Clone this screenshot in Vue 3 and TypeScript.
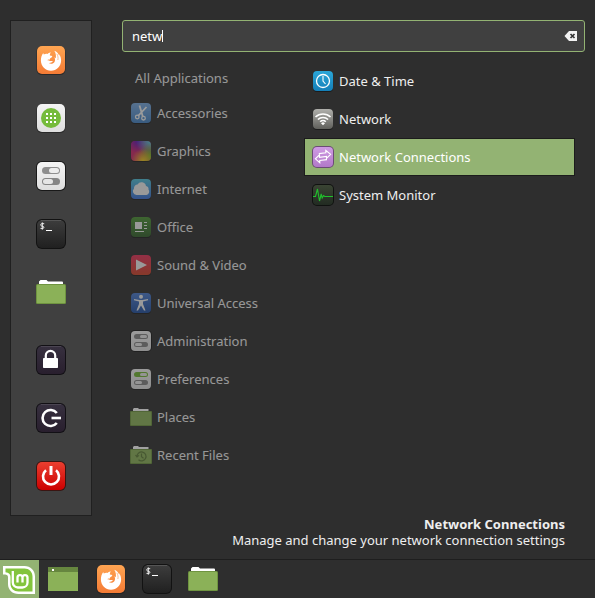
<script setup lang="ts">
import { nextTick, onMounted, ref, watch } from 'vue'

interface Entry {
  label: string
  icon: string
}

const favorites: Entry[] = [
  { label: 'Firefox', icon: 'firefox' },
  { label: 'Software Manager', icon: 'software' },
  { label: 'System Settings', icon: 'settings' },
  { label: 'Terminal', icon: 'terminal' },
  { label: 'Files', icon: 'files' },
]

const session: Entry[] = [
  { label: 'Lock screen', icon: 'lock' },
  { label: 'Log out', icon: 'logout' },
  { label: 'Shut down', icon: 'power' },
]

const categories: Entry[] = [
  { label: 'Accessories', icon: 'accessories' },
  { label: 'Graphics', icon: 'graphics' },
  { label: 'Internet', icon: 'internet' },
  { label: 'Office', icon: 'office' },
  { label: 'Sound & Video', icon: 'media' },
  { label: 'Universal Access', icon: 'access' },
  { label: 'Administration', icon: 'admin' },
  { label: 'Preferences', icon: 'prefs' },
  { label: 'Places', icon: 'places' },
  { label: 'Recent Files', icon: 'recent' },
]

const results: Entry[] = [
  { label: 'Date & Time', icon: 'clock' },
  { label: 'Network', icon: 'wifi' },
  { label: 'Network Connections', icon: 'connections' },
  { label: 'System Monitor', icon: 'monitor' },
]

const launchers: Entry[] = [
  { label: 'Firefox', icon: 'firefox' },
  { label: 'Terminal', icon: 'terminal' },
  { label: 'Files', icon: 'files' },
]

const query = ref('netw')
const selected = ref(2)
const field = ref<HTMLInputElement | null>(null)
const caretX = ref(0)

// The caret is drawn after the typed text, whether or not the field has focus.
async function placeCaret() {
  await nextTick()
  const context = document.createElement('canvas').getContext('2d')
  if (!field.value || !context) return
  const style = getComputedStyle(field.value)
  context.font = `${style.fontSize} ${style.fontFamily}`
  caretX.value = Math.round(parseFloat(style.paddingLeft) + context.measureText(query.value).width)
}

onMounted(placeCaret)
watch(query, placeCaret)
</script>

<template>
  <svg class="sprite" width="0" height="0" aria-hidden="true">
    <defs>
      <linearGradient id="g-orange" x2="0" y2="1"><stop stop-color="#ffa552" /><stop offset="1" stop-color="#f47b35" /></linearGradient>
      <linearGradient id="g-light" x2="0" y2="1"><stop stop-color="#f4f4f4" /><stop offset="1" stop-color="#dedede" /></linearGradient>
      <linearGradient id="g-dark" x2="0" y2="1"><stop stop-color="#3d3d3d" /><stop offset="1" stop-color="#202020" /></linearGradient>
      <linearGradient id="g-plum" x2="0" y2="1"><stop stop-color="#37303f" /><stop offset="1" stop-color="#291f2e" /></linearGradient>
      <linearGradient id="g-red" x2="0" y2="1"><stop stop-color="#ea3f30" /><stop offset="1" stop-color="#cc0000" /></linearGradient>
      <linearGradient id="g-steel" x2="0" y2="1"><stop stop-color="#78a9e0" /><stop offset="1" stop-color="#4382c4" /></linearGradient>
      <linearGradient id="g-sky" x2="0" y2="1"><stop stop-color="#4fc0d8" /><stop offset="1" stop-color="#3a6fd6" /></linearGradient>
      <linearGradient id="g-green" x2="0" y2="1"><stop stop-color="#4c9434" /><stop offset="1" stop-color="#32602b" /></linearGradient>
      <linearGradient id="g-media" x2="0" y2="1"><stop stop-color="#e8315a" /><stop offset="1" stop-color="#cf4328" /></linearGradient>
      <linearGradient id="g-access" x2="0" y2="1"><stop stop-color="#4a7bd0" /><stop offset="1" stop-color="#1f4f9f" /></linearGradient>
      <linearGradient id="g-clock" x2="0" y2="1"><stop stop-color="#2ba6d8" /><stop offset="1" stop-color="#147fb8" /></linearGradient>
      <linearGradient id="g-wifi" x2="0" y2="1"><stop stop-color="#b0b0ac" /><stop offset="1" stop-color="#60605c" /></linearGradient>
      <linearGradient id="g-violet" x2="0" y2="1"><stop stop-color="#cf9be3" /><stop offset="1" stop-color="#b279c9" /></linearGradient>
      <linearGradient id="g-monitor" x2="0" y2="1"><stop stop-color="#3a4433" /><stop offset="1" stop-color="#222b22" /></linearGradient>
      <radialGradient id="g-violet-corner" cx=".35" cy="0" r=".6"><stop stop-color="#5a10b8" /><stop offset="1" stop-color="#5a10b8" stop-opacity="0" /></radialGradient>
      <radialGradient id="g-teal-corner" cx="1" cy="0" r=".75"><stop stop-color="#49d0dc" /><stop offset="1" stop-color="#49d0dc" stop-opacity="0" /></radialGradient>
      <radialGradient id="g-green-corner" cx="1" cy=".75" r=".65"><stop stop-color="#62b51c" /><stop offset="1" stop-color="#62b51c" stop-opacity="0" /></radialGradient>
      <radialGradient id="g-yellow-corner" cx=".6" cy="1" r=".6"><stop stop-color="#f0cc1a" /><stop offset="1" stop-color="#f0cc1a" stop-opacity="0" /></radialGradient>
    </defs>

    <symbol id="firefox" viewBox="0 0 30 30">
      <rect x=".5" y="1" width="29" height="29" rx="5.5" fill="#1c1c1c" opacity=".6" />
      <rect x="1" y="1" width="28" height="28" rx="5" fill="url(#g-orange)" />
      <path fill="#fff" d="M4.900 15.500C4.900 12.600 5.600 10.400 7.200 8L7.800 9.600C9 8.800 10.300 8.700 11.500 9 12.500 8 13.500 7.500 14.800 7.500 14 8.500 13.800 9.500 13.900 10.500L16.300 10.900C16.300 12 15 12.700 14 13.400L13.800 14.700C12.700 14.400 11.700 14.600 11 15.400 12.300 15.200 13 16 14.200 16.100 15.200 16.100 15.900 15.600 16.900 16.300 16 17.600 14.500 18.100 12.800 18 14.800 19.200 17.300 18.800 18.500 16.900 19.300 15.500 19.200 13.700 18.400 12.200L19.800 13.200C20.200 10.400 19.800 7.800 18.200 5.800 20.800 6.600 22.600 8.600 23.200 10.800 23.400 10.200 23.300 9.500 23.100 8.900 24.600 11 25.100 13.500 25.100 15.600 25.100 21.300 20.600 25.800 15 25.800S4.900 21.300 4.900 15.500Z" />
      <path d="M20.800 8.800C22 10.800 22.300 12.800 21.900 15" fill="none" stroke="#f99346" stroke-width=".6" />
    </symbol>
    <symbol id="software" viewBox="0 0 30 30">
      <rect x=".5" y="1" width="29" height="29" rx="5.5" fill="#1c1c1c" opacity=".6" />
      <rect x="1" y="1" width="28" height="28" rx="5" fill="url(#g-light)" />
      <circle cx="15" cy="15" r="10" fill="#75bb3b" />
      <path fill="#fff" d="M10 10h2v2h-2zM14 10h2v2h-2zM18 10h2v2h-2zM10 14h2v2h-2zM14 14h2v2h-2zM18 14h2v2h-2zM10 18h2v2h-2zM14 18h2v2h-2zM18 18h2v2h-2z" />
    </symbol>
    <symbol id="settings" viewBox="0 0 30 30">
      <rect width="30" height="30" rx="6" fill="#191919" />
      <rect x="1" y="1" width="28" height="28" rx="5" fill="url(#g-light)" />
      <rect x="6" y="6" width="18" height="7" rx="3.5" fill="#8e8e8e" />
      <rect x="13" y="7" width="10" height="5" rx="2.5" fill="#ececec" />
      <rect x="6" y="17" width="18" height="7" rx="3.5" fill="#858585" />
      <rect x="7" y="18" width="10" height="5" rx="2.5" fill="#e6e6e6" />
    </symbol>
    <symbol id="terminal" viewBox="0 0 30 30">
      <rect width="30" height="30" rx="6" fill="#121212" />
      <rect x="1" y="1" width="28" height="28" rx="5" fill="url(#g-dark)" />
      <path d="M5 1.5h20" stroke="#555" fill="none" />
      <path d="M8.200 4.700H5.600C4.500 4.700 4.500 7 5.600 7.100L7 7.300C8.200 7.500 8.100 9.400 7 9.400H4.500M6.300 3.400V10.700" stroke="#eee" stroke-width="1" fill="none" />
      <path d="M10 11.500h6" stroke="#fff" fill="none" />
    </symbol>
    <symbol id="files" viewBox="0 0 30 30">
      <path d="M3 7V4.500L4.500 3H10.500L12 4.500H26a1 1 0 0 1 1 1V8H3z" fill="#fff" />
      <rect y="7" width="30" height="20" rx="1.500" fill="#6f9440" />
      <rect x="1" y="8" width="28" height="18" rx=".5" fill="#8bb158" />
    </symbol>
    <symbol id="lock" viewBox="0 0 30 30">
      <rect width="30" height="30" rx="6" fill="#121015" />
      <rect x="1" y="1" width="28" height="28" rx="5" fill="url(#g-plum)" />
      <path d="M5 1.500h20" stroke="#4b4552" fill="none" />
      <path d="M9.800 14V10.500a4.700 4.700 0 0 1 9.400 0V14" fill="none" stroke="#fff" stroke-width="2.200" />
      <rect x="7" y="13" width="15" height="10" rx=".8" fill="#fff" />
    </symbol>
    <symbol id="logout" viewBox="0 0 30 30">
      <rect width="30" height="30" rx="6" fill="#121015" />
      <rect x="1" y="1" width="28" height="28" rx="5" fill="url(#g-plum)" />
      <path d="M5 1.500h20" stroke="#4b4552" fill="none" />
      <path d="M20.800 10a8 8 0 1 0 0 10" fill="none" stroke="#fff" stroke-width="2.600" />
      <path d="M15.500 15H25" stroke="#fff" stroke-width="2.600" />
    </symbol>
    <symbol id="power" viewBox="0 0 30 30">
      <rect width="30" height="30" rx="6" fill="#3a1512" />
      <rect x="1" y="1" width="28" height="28" rx="5" fill="url(#g-red)" />
      <path d="M10 9.200a8 8 0 1 0 10 0" fill="none" stroke="#fff" stroke-width="2.600" />
      <path d="M15 5v9" stroke="#fff" stroke-width="3" />
    </symbol>
    <symbol id="desktop" viewBox="0 0 30 30">
      <rect y="3" width="30" height="24" fill="#8bb158" />
      <rect y="3" width="30" height="5" fill="#66863f" />
      <rect x="4" y="5" width="2" height="2" fill="#fff" />
    </symbol>
    <symbol id="mint" viewBox="0 0 39 38">
      <path d="M3 6H24.500C30.500 6 35 10.500 35 16.500V34H18.500C12.500 34 8 30 8 24V17C8 15 6.500 14.500 3 14.500Z" fill="#fff" />
      <path d="M5.500 8.500H24.500C29 8.500 32.500 12 32.500 16.500V31.500H18.500C14 31.500 10.500 28.500 10.500 24V17C10.500 14 9 12.500 5.500 12.200Z" fill="#83c43d" />
      <path d="M12.800 11V22.500a5 5 0 0 0 5 5H22.500a5 5 0 0 0 5-5V17.600a2.500 2.500 0 0 0-5 0V22.500M22.500 17.600a2.500 2.500 0 0 0-5 0V22.500" fill="none" stroke="#fff" stroke-width="2.300" />
    </symbol>

    <symbol id="accessories" viewBox="0 0 22 22">
      <rect x="1" y="1" width="20" height="21" rx="4" fill="#1c1c1c" />
      <rect x="1" y="1" width="20" height="20" rx="4" fill="url(#g-steel)" />
      <path d="M9.500 3.500 12.800 14.500M16.500 5 8 14" stroke="#f4f4f4" stroke-width="1.800" fill="none" />
      <circle cx="7.300" cy="15" r="1.800" fill="none" stroke="#f4f4f4" stroke-width="1.300" />
      <circle cx="13.500" cy="16.200" r="1.800" fill="none" stroke="#f4f4f4" stroke-width="1.300" />
    </symbol>
    <symbol id="graphics" viewBox="0 0 22 22">
      <rect x="1" y="1" width="20" height="21" rx="4" fill="#1c1c1c" />
      <rect x="1" y="1" width="20" height="20" rx="4" fill="#cc2568" />
      <rect x="1" y="1" width="20" height="20" rx="4" fill="url(#g-violet-corner)" />
      <rect x="1" y="1" width="20" height="20" rx="4" fill="url(#g-teal-corner)" />
      <rect x="1" y="1" width="20" height="20" rx="4" fill="url(#g-green-corner)" />
      <rect x="1" y="1" width="20" height="20" rx="4" fill="url(#g-yellow-corner)" />
    </symbol>
    <symbol id="internet" viewBox="0 0 22 22">
      <rect x="1" y="1" width="20" height="21" rx="4" fill="#1c1c1c" />
      <rect x="1" y="1" width="20" height="20" rx="4" fill="url(#g-sky)" />
      <path d="M6.500 17a3.800 3.800 0 0 1-2.500-6.500A3.600 3.600 0 0 1 7.500 6.500a4.600 4.600 0 0 1 8.500 1.500 3.200 3.200 0 0 1 2.500 3.600A3.400 3.400 0 0 1 16.500 17Z" fill="#f2f2f2" />
    </symbol>
    <symbol id="office" viewBox="0 0 22 22">
      <rect x="1" y="1" width="20" height="21" rx="4" fill="#1c1c1c" />
      <rect x="1" y="1" width="20" height="20" rx="4" fill="url(#g-green)" />
      <path d="M5 6h7v7H5zM14 6h3v1h-3zM14 9h3v1h-3zM14 12h3v1h-3zM5 15h9v1H5z" fill="#f2f2f2" />
    </symbol>
    <symbol id="media" viewBox="0 0 22 22">
      <rect x="1" y="1" width="20" height="21" rx="4" fill="#1c1c1c" />
      <rect x="1" y="1" width="20" height="20" rx="4" fill="url(#g-media)" />
      <path d="M6 5.500 17 11 6 16.500Z" fill="#f2f2f2" />
    </symbol>
    <symbol id="access" viewBox="0 0 22 22">
      <rect x="1" y="1" width="20" height="21" rx="4" fill="#1c1c1c" />
      <rect x="1" y="1" width="20" height="20" rx="4" fill="url(#g-access)" />
      <circle cx="11" cy="4.800" r="2" fill="#f2f2f2" />
      <path d="M4 7 9.500 8h3L18 7v1.300L13 9.600V12L15.500 18.500H14L11 13.500 8 18.500H6.500L9 12V9.600L4 8.300Z" fill="#f2f2f2" />
    </symbol>
    <symbol id="admin" viewBox="0 0 22 22">
      <rect width="22" height="22" rx="5" fill="#161616" />
      <rect x="1" y="1" width="20" height="20" rx="4" fill="url(#g-light)" />
      <rect x="4" y="4" width="14" height="5" rx="2.500" fill="#838383" />
      <rect x="10" y="5" width="7" height="3" rx="1.500" fill="#e8e8e8" />
      <rect x="4" y="12" width="14" height="5" rx="2.500" fill="#838383" />
      <rect x="5" y="13" width="7" height="3" rx="1.500" fill="#e8e8e8" />
    </symbol>
    <symbol id="prefs" viewBox="0 0 22 22">
      <rect x="1" y="1" width="20" height="21" rx="4" fill="#1c1c1c" />
      <rect x="1" y="1" width="20" height="20" rx="4" fill="url(#g-light)" />
      <rect x="4" y="4" width="14" height="5" rx="2.500" fill="#70b530" />
      <rect x="10" y="5" width="7" height="3" rx="1.500" fill="#e8e8e8" />
      <rect x="4" y="12" width="14" height="5" rx="2.500" fill="#838383" />
      <rect x="5" y="13" width="7" height="3" rx="1.500" fill="#e8e8e8" />
    </symbol>
    <symbol id="places" viewBox="0 0 22 22">
      <path d="M3 5V3L4 2H8L9 3H18.500V6H3z" fill="#fff" />
      <rect y="5" width="22" height="15" rx="1" fill="#6f9440" />
      <rect x="1" y="6" width="20" height="13" fill="#8bb158" />
    </symbol>
    <symbol id="recent" viewBox="0 0 22 22">
      <path d="M3 5V3L4 2H8L9 3H18.500V6H3z" fill="#fff" />
      <rect y="5" width="22" height="15" rx="1" fill="#6f9440" />
      <rect x="1" y="6" width="20" height="13" fill="#8bb158" />
      <path d="M7 12.500a4.500 4.500 0 1 1 1.500 3.300M5.500 11 7 13l2-1.600M11.500 9.500v3.200l2 1.600" fill="none" stroke="#5d7c37" stroke-width="1.200" />
    </symbol>

    <symbol id="clock" viewBox="0 0 22 22">
      <rect x="1" y="1" width="20" height="21" rx="4" fill="#1c1c1c" />
      <rect x="1" y="1" width="20" height="20" rx="4" fill="url(#g-clock)" />
      <circle cx="11" cy="11" r="6.500" fill="none" stroke="#fff" stroke-width="1.300" />
      <path d="M11 6v5l2.500 3" fill="none" stroke="#fff" stroke-width="1.100" />
    </symbol>
    <symbol id="wifi" viewBox="0 0 22 22">
      <rect x="1" y="1" width="20" height="21" rx="4" fill="#1c1c1c" />
      <rect x="1" y="1" width="20" height="20" rx="4" fill="url(#g-wifi)" />
      <path d="M3.500 9a11 11 0 0 1 15 0M5.900 11.500a7.500 7.500 0 0 1 10.200 0M8.200 13.800a4 4 0 0 1 5.600 0" fill="none" stroke="#fff" stroke-width="1.600" />
      <path d="M11 17.200 9 15.200a2.800 2.800 0 0 1 4 0Z" fill="#fff" />
    </symbol>
    <symbol id="connections" viewBox="0 0 22 22">
      <rect width="22" height="22" rx="5" fill="#6b4c75" />
      <rect x="1" y="1" width="20" height="20" rx="4" fill="url(#g-violet)" />
      <path d="M6.800 7.600 13.800 6.800V4.300L18.600 8.300 14.500 12.400V10.400L7.500 11.400V8.900L3.400 12.800 7.800 16.700V14.400L15 13.600" fill="none" stroke="#fff" stroke-width="1.100" />
    </symbol>
    <symbol id="monitor" viewBox="0 0 22 22">
      <rect width="22" height="22" rx="5" fill="#101210" />
      <rect x="1" y="1" width="20" height="20" rx="4" fill="url(#g-monitor)" />
      <path d="M1 12.500H3.500L5.500 5 7.500 17 9.200 10 10.200 14 11.500 11.500 12.800 12.500H21" fill="none" stroke="#20c02c" stroke-width="1.100" />
    </symbol>
  </svg>

  <div class="desktop">
    <main class="menu">
      <nav class="sidebar" aria-label="Favorites">
        <button v-for="item in favorites" :key="item.icon" type="button" class="side-button" :aria-label="item.label">
          <svg class="icon-large"><use :href="`#${item.icon}`" /></svg>
        </button>
        <div class="session">
          <button v-for="item in session" :key="item.icon" type="button" class="side-button" :aria-label="item.label">
            <svg class="icon-large"><use :href="`#${item.icon}`" /></svg>
          </button>
        </div>
      </nav>

      <div class="content">
        <div class="search">
          <input ref="field" v-model="query" class="search-input" type="text" aria-label="Search applications" spellcheck="false" autocomplete="off" />
          <span class="caret" :style="{ left: `${caretX}px` }"></span>
          <button type="button" class="clear" aria-label="Clear search" @click="query = ''">
            <svg class="clear-icon" viewBox="0 0 14 12">
              <path d="M5 1H13V11H5L.5 6Z" fill="#f2f2f2" />
              <path d="M6.500 4 10.500 8M10.500 4 6.500 8" stroke="#333" stroke-width="1.700" />
            </svg>
          </button>
        </div>

        <div class="columns">
          <div class="categories">
            <button type="button" class="all">All Applications</button>
            <button v-for="item in categories" :key="item.icon" type="button" class="row">
              <svg class="icon-small" aria-hidden="true"><use :href="`#${item.icon}`" /></svg>
              <span>{{ item.label }}</span>
            </button>
          </div>
          <div class="results">
            <button
              v-for="(item, index) in results"
              :key="item.icon"
              type="button"
              class="row result"
              :class="{ selected: index === selected }"
              @click="selected = index"
            >
              <svg class="icon-small" aria-hidden="true"><use :href="`#${item.icon}`" /></svg>
              <span>{{ item.label }}</span>
            </button>
          </div>
        </div>
      </div>
    </main>

    <div class="description">
      <strong>Network Connections</strong>
      <span>Manage and change your network connection settings</span>
    </div>

    <footer class="taskbar">
      <button type="button" class="start" aria-label="Menu">
        <svg class="mint"><use href="#mint" /></svg>
      </button>
      <button type="button" aria-label="Show desktop">
        <svg class="icon-large"><use href="#desktop" /></svg>
      </button>
      <div class="launchers">
        <button v-for="item in launchers" :key="item.icon" type="button" :aria-label="item.label">
          <svg class="icon-large"><use :href="`#${item.icon}`" /></svg>
        </button>
      </div>
    </footer>
  </div>
</template>

<style>
body {
  background: #2e2e2e;
}
</style>

<style scoped>
.sprite {
  position: absolute;
}

.desktop {
  box-sizing: border-box;
  display: flex;
  flex-direction: column;
  min-height: 100vh;
  background: #2e2e2e;
  color: #eee;
  font-family: 'Noto Sans', 'Open Sans', sans-serif;
  font-size: 13px;
  line-height: 16px;
}

button {
  margin: 0;
  padding: 0;
  border: 0;
  background: none;
  color: inherit;
  font: inherit;
  text-align: left;
}

svg {
  display: block;
}

.icon-large {
  width: 30px;
  height: 30px;
}

.icon-small {
  flex: none;
  width: 22px;
  height: 22px;
}

.menu {
  display: flex;
  align-items: flex-start;
  gap: 30px;
  padding: 20px 10px 0;
}

.sidebar {
  box-sizing: border-box;
  flex: none;
  display: flex;
  flex-direction: column;
  width: 82px;
  padding: 10px 0;
  border: 1px solid #202020;
  background: #404040;
}

.side-button {
  display: flex;
  align-items: center;
  justify-content: center;
  width: 100%;
  height: 58px;
}

.session {
  padding-top: 10px;
}

.content {
  flex: 1;
  min-width: 0;
}

.search {
  position: relative;
  display: flex;
  align-items: center;
  height: 30px;
  border: 1px solid #93b373;
  border-radius: 3px;
  background: #404040;
}

.search-input {
  flex: 1;
  min-width: 0;
  height: 30px;
  box-sizing: border-box;
  padding: 0 9px;
  border: 0;
  outline: 0;
  background: transparent;
  color: #fff;
  caret-color: transparent;
  font: inherit;
}

.caret {
  position: absolute;
  top: 9px;
  width: 1px;
  height: 12px;
  background: #fff;
}

.clear {
  padding: 0 6px;
}

.clear-icon {
  width: 14px;
  height: 12px;
}

.columns {
  display: flex;
  gap: 12px;
  padding: 10px 10px 0 0;
}

.categories {
  flex: none;
  display: flex;
  flex-direction: column;
  width: 170px;
  opacity: 0.55;
}

.all {
  height: 32px;
  padding-left: 13px;
}

.row {
  display: flex;
  align-items: center;
  gap: 5px;
  box-sizing: border-box;
  height: 38px;
  padding: 0 8px;
  white-space: nowrap;
}

.results {
  flex: 1;
  display: flex;
  flex-direction: column;
}

.result {
  padding: 0 7px;
  border: 1px solid transparent;
}

.selected {
  border-color: #1c1c1c;
  background: #93b373;
  color: #fff;
}

.description {
  display: flex;
  flex-direction: column;
  align-items: flex-end;
  margin-bottom: 11px;
  padding-right: 30px;
  text-align: right;
}

.taskbar {
  display: flex;
  align-items: center;
  height: 38px;
  margin-top: auto;
  border-top: 1px solid #1e1e1e;
}

.start {
  margin-right: 9px;
  background: #93b373;
}

.mint {
  width: 39px;
  height: 38px;
}

.launchers {
  display: flex;
  gap: 16px;
  padding-left: 18px;
}
</style>
